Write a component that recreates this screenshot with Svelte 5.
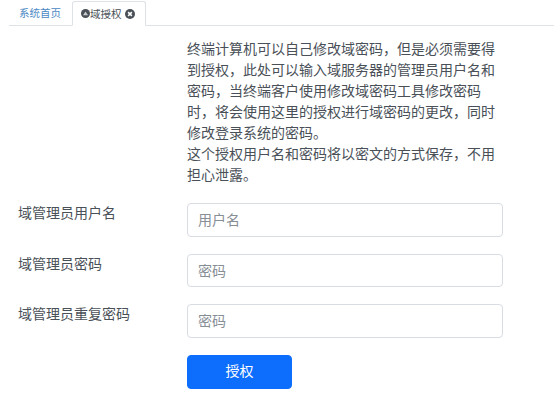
<script>
  const fields = [
    { label: "域管理员用户名", placeholder: "用户名", type: "text" },
    { label: "域管理员密码", placeholder: "密码", type: "password" },
    { label: "域管理员重复密码", placeholder: "密码", type: "password" },
  ];
</script>

<div class="page">
  <div class="tabs">
    <a class="tab" href="#home">系统首页</a>
    <div class="tab active">
      <svg class="icon" viewBox="0 0 16 16" width="9" height="9">
        <circle cx="8" cy="8" r="8" fill="#495057" />
        <path d="M3.5 11 L8 4.5 L12.5 11 Z" fill="#c9ccd0" />
      </svg>
      <span>域授权</span>
      <svg class="close" viewBox="0 0 16 16" width="10" height="10">
        <circle cx="8" cy="8" r="8" fill="#495057" />
        <path d="M5 5 L11 11 M11 5 L5 11" stroke="#fff" stroke-width="2.4" />
      </svg>
    </div>
  </div>

  <div class="form">
    <div class="row intro">
      <div class="spacer"></div>
      <p>
        终端计算机可以自己修改域密码，但是必须需要得到授权，此处可以输入域服务器的管理员用户名和密码，当终端客户使用修改域密码工具修改密码时，将会使用这里的授权进行域密码的更改，同时修改登录系统的密码。<br />这个授权用户名和密码将以密文的方式保存，不用担心泄露。
      </p>
    </div>

    {#each fields as field}
      <div class="row">
        <label class="spacer" for={field.label}>{field.label}</label>
        <input id={field.label} type={field.type} placeholder={field.placeholder} />
      </div>
    {/each}

    <div class="row">
      <div class="spacer"></div>
      <button type="button">授权</button>
    </div>
  </div>
</div>

<style>
  :global(body) {
    background: #fff;
  }

  .page {
    width: 554px;
    height: 420px;
    overflow: hidden;
    font-family: "Liberation Sans", "Noto Sans CJK SC", sans-serif;
    font-size: 14px;
    line-height: 21px;
    color: #495057;
  }

  .tabs {
    display: flex;
    align-items: flex-end;
    height: 25px;
    margin-left: 9px;
    border-bottom: 1px solid #dee2e6;
  }

  .tab {
    display: flex;
    align-items: center;
    height: 24px;
    padding: 0 11px 0 10px;
    font-size: 10.5px;
    line-height: 14px;
    color: #4b88c4;
    text-decoration: none;
    box-sizing: border-box;
  }

  .tab.active {
    height: 25px;
    margin-bottom: -1px;
    padding: 0 10px 0 8px;
    color: #495057;
    background: #fff;
    border: 1px solid #dee2e6;
    border-bottom-color: #fff;
    border-radius: 3px 3px 0 0;
  }

  .close {
    margin-left: 3px;
  }

  .form {
    padding: 13px 0 0 18px;
  }

  .row {
    display: flex;
    margin-bottom: 17px;
  }

  .spacer {
    flex: 0 0 169px;
  }

  p {
    width: 316px;
    margin: 0;
    font-size: 14px;
    line-height: 21px;
    color: #495057;
  }

  input {
    width: 316px;
    height: 33.7px;
    padding: 0 10px;
    box-sizing: border-box;
    font: inherit;
    color: #495057;
    background: #fff;
    border: 1px solid #d8dde3;
    border-radius: 4px;
    outline: none;
  }

  input::placeholder {
    color: #868e96;
    opacity: 1;
  }

  button {
    width: 105px;
    height: 33.7px;
    font: inherit;
    font-size: 14px;
    color: #fff;
    background: #0d6efd;
    border: 1px solid #0d6efd;
    border-radius: 4px;
  }
</style>
